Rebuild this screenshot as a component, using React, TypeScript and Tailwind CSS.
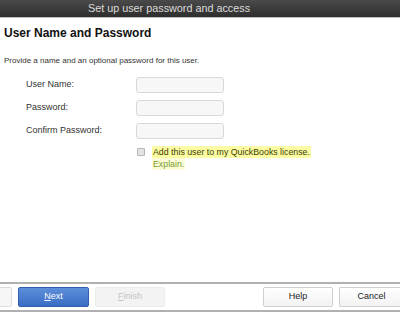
import React from 'react';

const font = { fontFamily: '"Liberation Sans", Arial, sans-serif' };

function Field({ label }: { label: string }) {
  return (
    <div className="flex items-center h-[16px]">
      <span className="w-[136px] pl-[26px] text-[9px] text-[#333]">{label}</span>
      <div className="w-[88px] h-[16px] rounded-[3px] border border-[#d9d9d9] bg-[#f7f7f7]" />
    </div>
  );
}

export default function App() {
  return (
    <div className="w-[400px] h-[318px] bg-white flex flex-col overflow-hidden" style={font}>
      <div className="h-[18px] bg-gradient-to-b from-[#4a4a4a] to-[#2e2e2e] border-b border-[#bdbdbd] flex items-center pl-[88px]">
        <span className="text-[10.8px] text-[#dcdcdc]">Set up user password and access</span>
      </div>

      <div className="flex-1 flex flex-col">
        <h1 className="mt-[7px] pl-[4px] text-[12px] font-bold text-[#111] leading-[16px]">User Name and Password</h1>
        <p className="mt-[14px] pl-[4px] text-[8px] text-[#333] leading-[12px]">
          Provide a name and an optional password for this user.
        </p>

        <div className="mt-[10px] flex flex-col gap-[7px]">
          <Field label="User Name:" />
          <Field label="Password:" />
          <Field label="Confirm Password:" />
        </div>

        <div className="mt-[7px] pl-[137px] flex items-start gap-[7px]">
          <div className="mt-[2px] w-[8px] h-[8px] border border-[#b5b5b5] bg-[#e3e3e3] rounded-[1px]" />
          <div className="flex flex-col text-[8.8px] leading-[12px]">
            <span className="bg-[#fbfca3] text-[#3d3d00] px-[1px]">Add this user to my QuickBooks license.</span>
            <span className="text-[#7a9a2e] bg-[#fdfed8] self-start px-[1px]">Explain.</span>
          </div>
        </div>
      </div>

      <div className="h-[30px] border-t-2 border-b-2 border-[#b0b0b0] mb-[6px] flex items-center text-[9px]">
        <div className="w-[12px] h-[20px] border border-l-0 border-[#dcdcdc] bg-[#f6f6f6] rounded-r-[2px]" />
        <div className="ml-[6px] w-[71px] h-[20px] rounded-[2px] bg-gradient-to-b from-[#5e8fda] to-[#3a6cc4] border border-[#2f5fae] flex items-center justify-center text-white">
          <span><span className="underline">N</span>ext</span>
        </div>
        <div className="ml-[6px] w-[70px] h-[20px] rounded-[2px] bg-[#f3f3f3] border border-[#ececec] flex items-center justify-center text-[#c4c4c4]">
          <span><span className="underline">F</span>inish</span>
        </div>
        <div className="ml-auto w-[70px] h-[20px] rounded-[2px] bg-gradient-to-b from-white to-[#f2f2f2] border border-[#cfcfcf] flex items-center justify-center text-[#222]">
          Help
        </div>
        <div className="ml-[6px] w-[64px] h-[20px] rounded-l-[2px] bg-gradient-to-b from-white to-[#f2f2f2] border border-r-0 border-[#cfcfcf] flex items-center justify-center text-[#222] -mr-[3px]">
          Cancel
        </div>
      </div>
    </div>
  );
}
